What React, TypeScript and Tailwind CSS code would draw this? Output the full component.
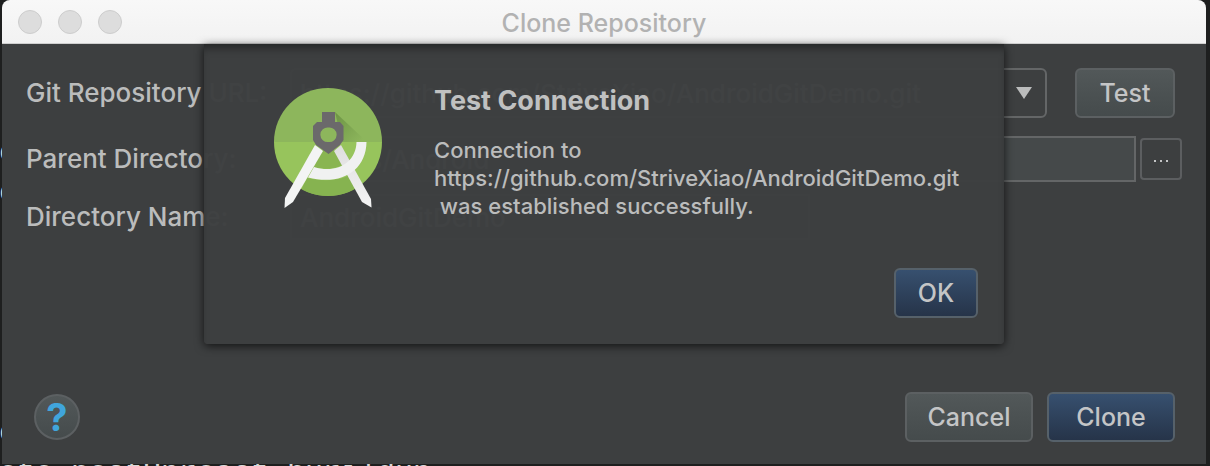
import type { ReactNode } from "react";

// Terminal output lying behind the window; only its edges peek out.
const TERMINAL = "o\no\n\n\n\n\n\no\note postUnreast burildun";

type ButtonProps = {
  children: ReactNode;
  primary?: boolean;
  className?: string;
};

function DialogButton({ children, primary, className = "" }: ButtonProps) {
  const tone = primary
    ? "border-[#56616a] from-[#37506f] to-[#263449]"
    : "border-[#5c6062] from-[#525859] to-[#454b4c]";
  return (
    <button
      type="button"
      className={`h-[50px] shrink-0 rounded-md border-2 bg-linear-to-b pt-0.5 text-center text-[25px] text-[#c4c5c6] ${tone} ${className}`}
    >
      {children}
    </button>
  );
}

function StudioLogo() {
  return (
    <svg viewBox="0 0 160 150" className="h-[150px] w-40" aria-hidden="true">
      <defs>
        <clipPath id="disc">
          <circle cx="78" cy="72" r="54" />
        </clipPath>
        <linearGradient id="leg" x1="0" y1="0" x2="0" y2="1">
          <stop offset="0" stopColor="#dedede" />
          <stop offset="1" stopColor="#f4f4f4" />
        </linearGradient>
        <linearGradient id="shade" x1="0" y1="0" x2="1" y2="1">
          <stop offset="0" stopColor="#6d9445" />
          <stop offset="0.9" stopColor="#8db65c" />
        </linearGradient>
      </defs>
      <g clipPath="url(#disc)">
        <rect x="24" y="18" width="108" height="54" fill="#8db65c" />
        <rect x="24" y="72" width="108" height="54" fill="#97c45c" />
        <path d="M85 42 L117 72 H92 Z" fill="url(#shade)" />
        <path d="M57 108 Q84 114 102 104 L114 130 H46 Z" fill="#80ad4c" opacity=".75" />
        <path d="M72 80 L64 97 Q82 102 96 93 L85 80 Z" fill="#83af4d" opacity=".7" />
      </g>
      <path d="M84 81 L91 75 L121 129 L121.500 137.500 L112 132 Z" fill="url(#leg)" />
      <path
        d="M106.500 72 H116.500 C116 101 91 116 58 107.500 L64 97 C86 104 106 93 106.500 72 Z"
        fill="#f0f1f1"
      />
      <path d="M65 75 L73 81 L43 132 L34.500 138 L35 128 Z" fill="#f3f4f4" />
      <path
        fillRule="evenodd"
        d="M72 42 H85 V52 H90 L93.500 56 V70 L90 75 L78.500 84 L66 75 L63 70 V56 L67 52 H72 Z M78.500 57.500 A7.300 7.300 0 1 0 78.500 72 A7.300 7.300 0 1 0 78.500 57.500 Z"
        fill="#6b696b"
      />
    </svg>
  );
}

function TitleBar() {
  return (
    <header className="relative flex h-11 items-center justify-center border-b border-[#cfcfcf] bg-linear-to-b from-[#f8f8f8] to-[#f2f2f2]">
      <div className="absolute left-4 flex gap-4">
        {["Close", "Minimize", "Zoom"].map((label) => (
          <button
            key={label}
            type="button"
            aria-label={label}
            className="size-6 rounded-full border border-[#cdcdcd] bg-[#dddddd]"
          />
        ))}
      </div>
      <h1 className="pt-1 text-[25px] font-medium text-[#b2b2b2]">Clone Repository</h1>
    </header>
  );
}

function CloneForm() {
  return (
    <form className="grid grid-cols-[264px_1fr] items-center px-6 pt-6 font-medium">
      <label htmlFor="url" className="h-[50px] leading-[50px]">
        Git Repository URL:
      </label>
      <div className="flex h-[50px] gap-7 pr-[7px]">
        <div className="flex min-w-0 flex-1 rounded-md border-2 border-[#646667]">
          <input
            id="url"
            defaultValue="https://github.com/StriveXiao/AndroidGitDemo.git"
            className="min-w-0 flex-1 px-2 outline-none"
          />
          <button type="button" aria-label="Recent repositories" className="w-[46px] pl-1">
            <svg viewBox="0 0 16 12" className="mx-auto h-3 w-4" aria-hidden="true">
              <path d="M0 0 H16 L8 12 Z" fill="#bbbcbc" />
            </svg>
          </button>
        </div>
        <DialogButton className="w-[100px]">Test</DialogButton>
      </div>

      <label htmlFor="parent" className="mt-4 h-[50px] leading-[50px]">
        Parent Directory:
      </label>
      <div className="mt-4 flex items-center gap-1">
        <input
          id="parent"
          defaultValue="/Users/Android"
          className="h-[46px] min-w-0 flex-1 border-2 border-[#646667] bg-[#45494a] px-2 outline-none"
        />
        <button
          type="button"
          aria-label="Browse"
          className="flex size-[42px] items-center justify-center gap-1 rounded-sm border-2 border-[#5c5e60] pt-1"
        >
          <i className="size-[2px] bg-[#c4c5c6]" />
          <i className="size-[2px] bg-[#c4c5c6]" />
          <i className="size-[2px] bg-[#c4c5c6]" />
        </button>
      </div>

      <label htmlFor="name" className="mt-2 h-[50px] leading-[50px]">
        Directory Name:
      </label>
      <input
        id="name"
        defaultValue="AndroidGitDemo"
        className="mt-2 h-[46px] w-[520px] border-2 border-[#646667] bg-[#45494a] px-2 outline-none"
      />
    </form>
  );
}

function ConnectionDialog() {
  return (
    <section
      role="dialog"
      aria-labelledby="dialog-title"
      className="absolute top-11 left-1/2 flex w-[800px] -translate-x-1/2 flex-col rounded-b-sm bg-[#3d3f40]/98 px-[26px] pb-[26px] shadow-[0_2px_10px_rgba(0,0,0,0.7),inset_0_8px_8px_-4px_rgba(0,0,0,0.4)]"
    >
      <div className="flex">
        <div className="mt-[26px] ml-5 w-[184px]">
          <StudioLogo />
        </div>
        <div className="pt-10">
          <h2 id="dialog-title" className="text-[27px] leading-[34px] font-bold text-[#c0c1c1]">
            Test Connection
          </h2>
          <p className="mt-[18px] text-[22px] leading-7 font-medium whitespace-pre text-[#bbbcbc]">
            {"Connection to\nhttps://github.com/StriveXiao/AndroidGitDemo.git\n was established successfully."}
          </p>
        </div>
      </div>
      <DialogButton primary className="mt-12 w-[84px] self-end font-medium">
        OK
      </DialogButton>
    </section>
  );
}

export default function App() {
  return (
    <div className="relative h-screen overflow-hidden bg-[#1e1f1f] pr-1 pb-0.5 pl-0.5 font-[Inter,sans-serif] text-[26px] text-[#bbbcbc]">
      <pre
        aria-hidden="true"
        className="absolute top-[133px] -left-px font-['Liberation_Mono',monospace] text-[30px] leading-10 text-[#d8d8d8]"
      >
        {TERMINAL}
      </pre>
      <main className="relative flex h-full flex-col overflow-hidden rounded-t-lg bg-[#3d3f40]">
        <TitleBar />
        <CloneForm />
        <footer className="mt-auto flex items-center gap-[14px] pr-[31px] pb-[22px] pl-8 font-medium">
          <button
            type="button"
            aria-label="Help"
            className="mr-auto size-[46px] rounded-full border-2 border-[#5c6062] bg-linear-to-b from-[#525859] to-[#454b4c] text-[38px] leading-10 font-bold text-[#40a5dc]"
          >
            ?
          </button>
          <DialogButton className="w-32">Cancel</DialogButton>
          <DialogButton primary className="w-32">
            Clone
          </DialogButton>
        </footer>
        <ConnectionDialog />
      </main>
    </div>
  );
}
